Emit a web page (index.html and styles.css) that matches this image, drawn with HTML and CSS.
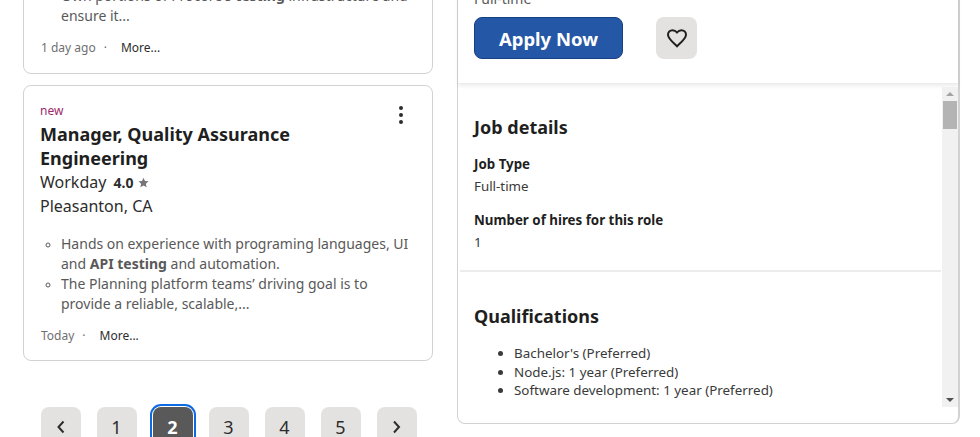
FILE: index.html
```html
<!DOCTYPE html>
<html lang="en">
<head>
    <meta charset="UTF-8">
    <title>Job search</title>
    <link rel="stylesheet" href="styles.css">
</head>
<body>
<div class="page">
    <div class="results">
        <div class="card card-first">
            <ul class="snippet">
                <li>Own portions of Procore's <b>testing</b> infrastructure and ensure it...</li>
            </ul>
            <div class="card-foot">
                <span class="date">1 day ago</span>
                <span class="dot">·</span>
                <span class="more">More...</span>
            </div>
        </div>
        <div class="card">
            <svg class="kebab" width="6" height="20" viewBox="0 0 6 20"><circle cx="3" cy="3" r="2"/><circle cx="3" cy="10" r="2"/><circle cx="3" cy="17" r="2"/></svg>
            <div class="new-tag">new</div>
            <h2 class="job-title">Manager, Quality Assurance Engineering</h2>
            <div class="company">
                Workday <span class="rating">4.0</span>
                <svg class="star" width="11" height="11" viewBox="0 0 24 24"><path d="M12 1.5l3.2 7.2 7.8.8-5.8 5.2 1.6 7.8L12 18.5l-6.8 4 1.6-7.8L1 9.5l7.8-.8z"/></svg>
            </div>
            <div class="location">Pleasanton, CA</div>
            <ul class="snippet">
                <li>Hands on experience with programing languages, UI and <b>API testing</b> and automation.</li>
                <li>The Planning platform teams’ driving goal is to provide a reliable, scalable,...</li>
            </ul>
            <div class="card-foot">
                <span class="date">Today</span>
                <span class="dot">·</span>
                <span class="more">More...</span>
            </div>
        </div>
        <nav class="pager">
            <span class="page-btn">
                <svg width="10" height="14" viewBox="0 0 10 14"><path class="chevron" d="M7.5 1.5L2.5 7l5 5.5"/></svg>
            </span>
            <span class="page-btn">1</span>
            <span class="page-btn current">2</span>
            <span class="page-btn">3</span>
            <span class="page-btn">4</span>
            <span class="page-btn">5</span>
            <span class="page-btn">
                <svg width="10" height="14" viewBox="0 0 10 14"><path class="chevron" d="M2 1.5L7 7l-5 5.5"/></svg>
            </span>
        </nav>
    </div>
    <div class="panel">
        <div class="panel-head">
            <div class="job-kind">Full-time</div>
            <div class="actions">
                <button class="apply">Apply Now</button>
                <button class="save">
                    <svg width="24" height="24" viewBox="0 0 24 24"><path d="M12 20.3l-1.3-1.2C5.900 14.800 3 12.100 3 8.800 3 6.200 5 4.300 7.500 4.300c1.700 0 3.400.8 4.500 2.200 1.100-1.400 2.800-2.200 4.500-2.200C19 4.300 21 6.200 21 8.800c0 3.300-2.900 6-7.700 10.300z"/></svg>
                </button>
            </div>
        </div>
        <div class="panel-body">
            <div class="panel-scroll">
                <section class="details">
                    <h3>Job details</h3>
                    <h4>Job Type</h4>
                    <p>Full-time</p>
                    <h4>Number of hires for this role</h4>
                    <p>1</p>
                </section>
                <section class="quals">
                    <h3>Qualifications</h3>
                    <ul>
                        <li>Bachelor's (Preferred)</li>
                        <li>Node.js: 1 year (Preferred)</li>
                        <li>Software development: 1 year (Preferred)</li>
                    </ul>
                </section>
            </div>
            <div class="scrollbar">
                <span class="arrow-up"></span>
                <span class="thumb"></span>
                <span class="arrow-down"></span>
            </div>
        </div>
    </div>
</div>
</body>
</html>
```

FILE: styles.css
```css
/* General styles */
html, body {
    margin: 0;
    padding: 0;
    height: 437px;
    overflow: hidden;
    background-color: #fff;
    font-family: 'Noto Sans', sans-serif;
    color: #2d2d2d;
}

.page {
    display: flex;
    align-items: flex-start;
    gap: 24px;
    padding-left: 23px;
}

/* Left column */
.results {
    width: 410px;
    flex-shrink: 0;
}

.card {
    position: relative;
    box-sizing: border-box;
    border: 1px solid #d4d2d0;
    border-radius: 8px;
    padding: 16px 16px 12px;
    margin-bottom: 12px;
}

.card-first {
    margin-top: -31px;
    margin-bottom: 11px;
    padding-bottom: 13px;
}

.kebab {
    position: absolute;
    top: 19px;
    right: 28px;
    fill: #2d2d2d;
}

.new-tag {
    font-size: 12px;
    line-height: 18px;
    margin-bottom: 2px;
    color: #9d2b6b;
}

.job-title {
    margin: 0;
    font-size: 18px;
    line-height: 24px;
    font-weight: 700;
    color: #1f1f1f;
    padding-right: 60px;
}

.company {
    font-size: 16px;
    line-height: 24px;
}

.rating {
    font-size: 14px;
    font-weight: 700;
    margin-left: 3px;
}

.star {
    fill: #767676;
}

.location {
    font-size: 16px;
    line-height: 23px;
}

.snippet {
    margin: 16px 0 0;
    padding-left: 21px;
    list-style: circle;
    font-size: 14px;
    line-height: 20px;
    color: #595959;
}

.snippet li::marker {
    font-size: 12px;
}

.card-first .snippet {
    margin-top: 0;
}

.card-foot {
    display: flex;
    align-items: center;
    margin-top: 10px;
    padding-left: 1px;
    font-size: 12px;
    line-height: 24px;
}

.date {
    color: #6f6f6f;
}

.dot {
    margin: 0 14px 0 8px;
    color: #6f6f6f;
}

.more {
    color: #2d2d2d;
}

/* Pagination */
.pager {
    display: flex;
    gap: 16px;
    margin: 46px 0 0 17.5px;
}

.page-btn {
    display: flex;
    align-items: center;
    justify-content: center;
    width: 40px;
    height: 40px;
    border-radius: 8px;
    background-color: #e4e2e0;
    font-size: 18px;
    color: #2d2d2d;
}

.page-btn.current {
    background-color: #595959;
    color: #fff;
    font-weight: 700;
    outline: 2px solid #0d6ae0;
    outline-offset: 1px;
}

.chevron {
    fill: none;
    stroke: #2d2d2d;
    stroke-width: 2;
}

/* Right panel */
.panel {
    box-sizing: border-box;
    width: 503px;
    height: 465px;
    margin-top: -41px;
    border: 1px solid #d4d2d0;
    border-width: 1px 2px 1px 1px;
    border-radius: 0 0 8px 8px;
}

.panel-head {
    height: 124px;
    padding: 0 16px;
    box-sizing: border-box;
    border-bottom: 1px solid #ececec;
    box-shadow: 0 2px 4px rgba(0, 0, 0, 0.08);
}

.job-kind {
    padding-top: 29px;
    font-size: 14px;
    line-height: 20px;
    height: 28px;
    box-sizing: content-box;
    color: #595959;
}

.actions {
    display: flex;
    gap: 33px;
    margin-top: 0;
}

.apply {
    width: 149px;
    height: 42px;
    border: 1px solid #164081;
    border-radius: 8px;
    background-color: #2557a7;
    color: #fff;
    font-family: 'Noto Sans', sans-serif;
    font-size: 18.5px;
    font-weight: 700;
}

.save {
    display: flex;
    align-items: center;
    justify-content: center;
    width: 41px;
    height: 42px;
    padding: 0;
    border: none;
    border-radius: 8px;
    background-color: #e4e2e0;
}

.save svg {
    fill: none;
    stroke: #1f1f1f;
    stroke-width: 2;
}

.panel-body {
    display: flex;
    height: 320px;
    padding-top: 3px;
}

.panel-scroll {
    flex: 1;
    overflow: hidden;
    padding-left: 2px;
}

.details {
    padding: 27px 0 18px 14px;
    margin-right: 1px;
    border-bottom: 2px solid #ececec;
}

.details h3,
.quals h3 {
    margin: 0 0 14px;
    font-size: 18px;
    line-height: 26px;
    font-weight: 700;
    color: #1f1f1f;
}

.details h4 {
    margin: 0;
    font-size: 13.33px;
    line-height: 20px;
    font-weight: 700;
    color: #1f1f1f;
}

.details p {
    margin: 2px 0 14px;
    font-size: 13.33px;
    line-height: 20px;
    color: #3a3a3a;
}

.details p:last-child {
    margin-bottom: 0;
}

.quals {
    padding: 31px 0 0 14px;
}

.quals h3 {
    margin-bottom: 15px;
}

.quals ul {
    margin: 0;
    padding-left: 40px;
    font-size: 13.4px;
    line-height: 18.67px;
    color: #3a3a3a;
}

/* Scrollbar drawn by hand */
.scrollbar {
    position: relative;
    width: 16px;
    height: 320px;
    background-color: #f1f1f1;
}

.thumb {
    position: absolute;
    top: 14px;
    left: 1px;
    width: 14px;
    height: 28px;
    background-color: #b4b4b4;
}

.arrow-up,
.arrow-down {
    position: absolute;
    left: 4px;
    width: 0;
    height: 0;
    border-left: 4px solid transparent;
    border-right: 4px solid transparent;
}

.arrow-up {
    top: 5px;
    border-bottom: 4px solid #a3a3a3;
}

.arrow-down {
    bottom: 5px;
    border-top: 4px solid #505050;
}
```
